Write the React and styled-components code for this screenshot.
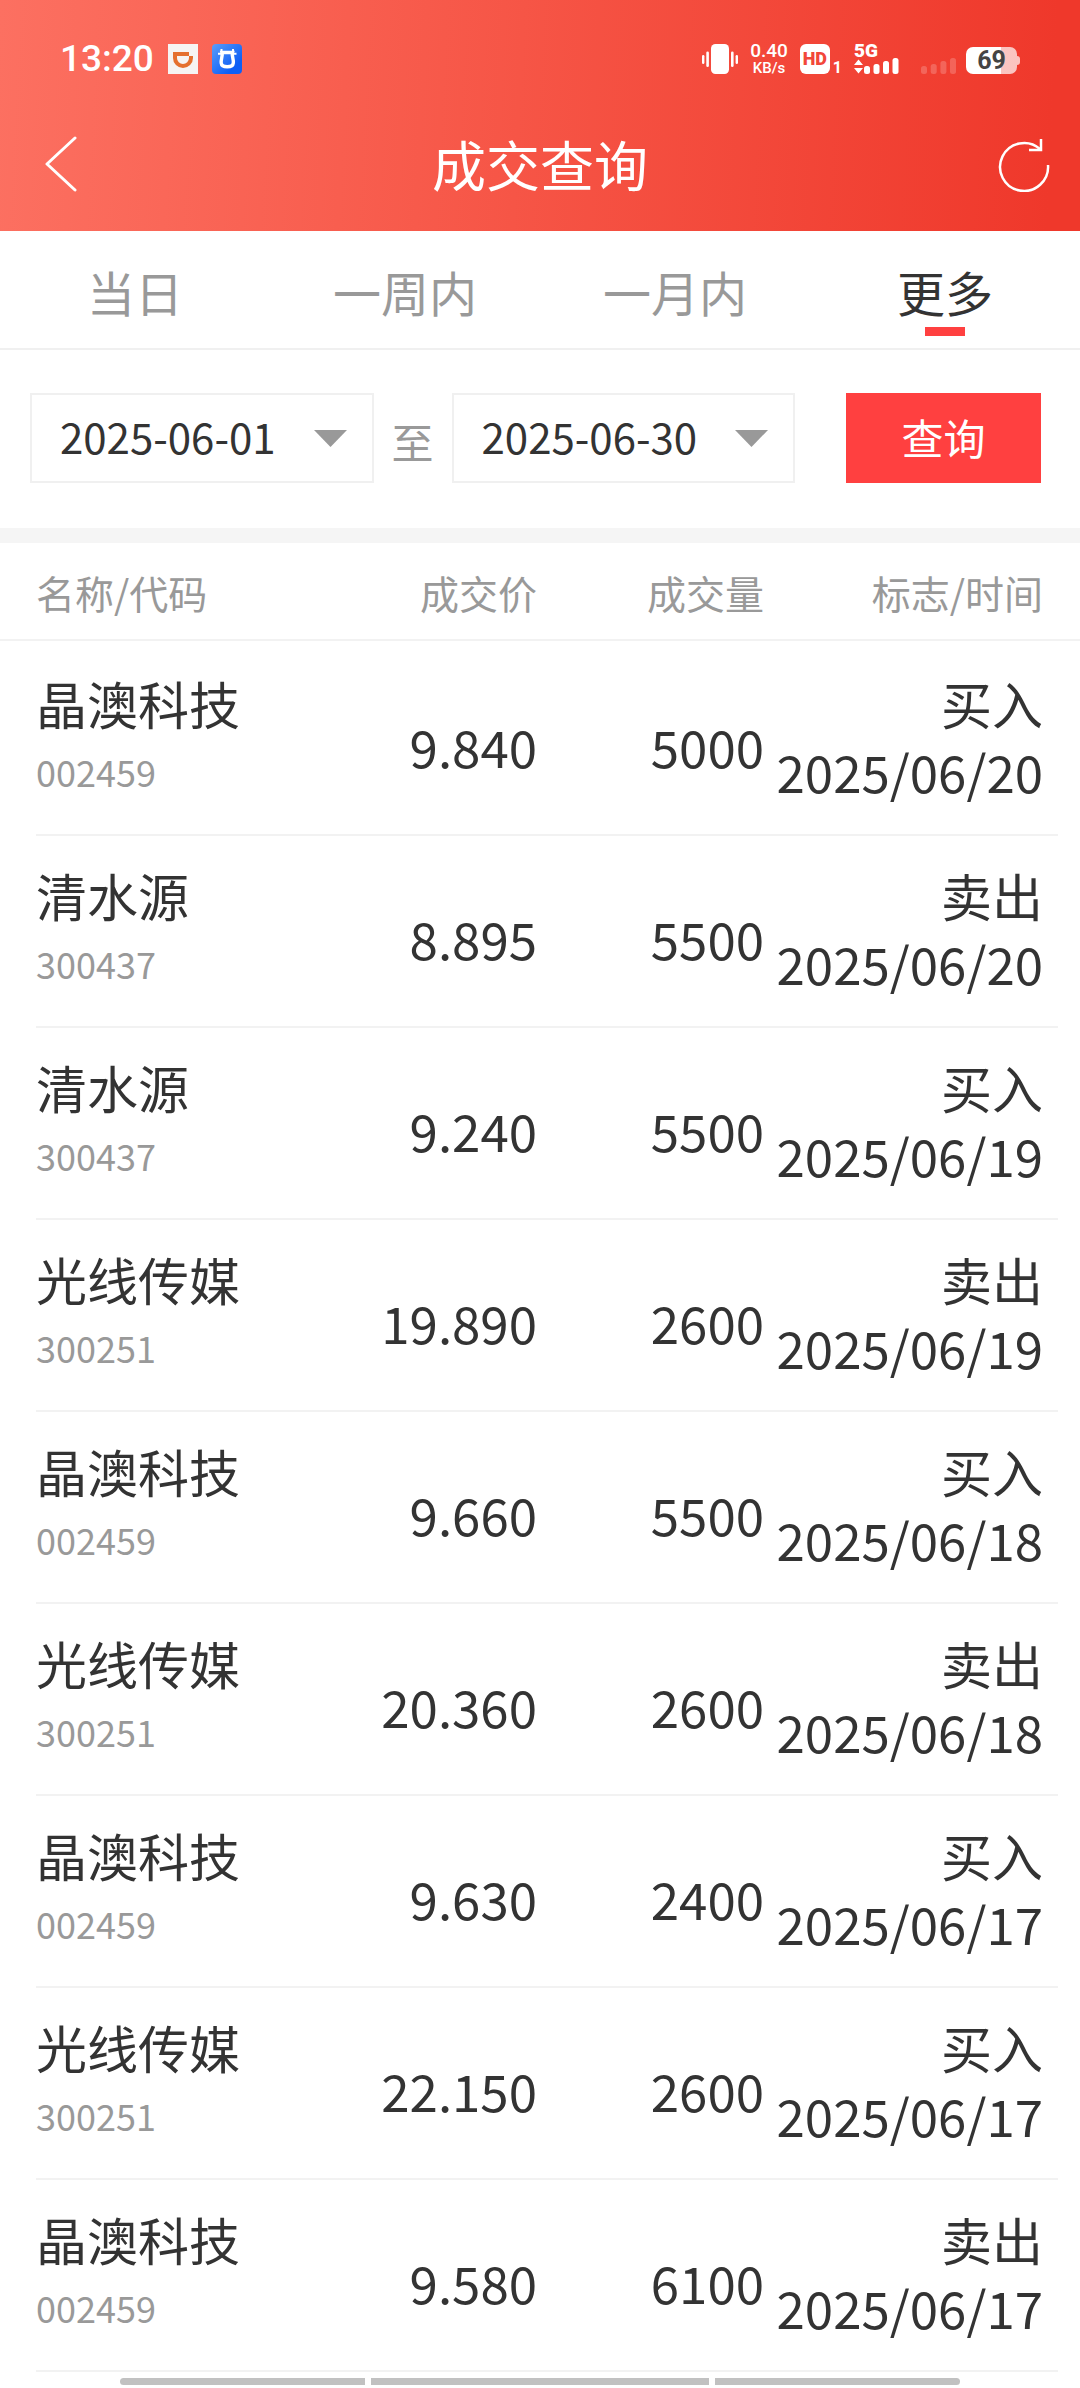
import React, { useState } from "react";
import styled, { createGlobalStyle } from "styled-components";

const tabs = ["当日", "一周内", "一月内", "更多"];

const deals = [
  { name: "晶澳科技", code: "002459", price: "9.840", volume: "5000", side: "买入", date: "2025/06/20" },
  { name: "清水源", code: "300437", price: "8.895", volume: "5500", side: "卖出", date: "2025/06/20" },
  { name: "清水源", code: "300437", price: "9.240", volume: "5500", side: "买入", date: "2025/06/19" },
  { name: "光线传媒", code: "300251", price: "19.890", volume: "2600", side: "卖出", date: "2025/06/19" },
  { name: "晶澳科技", code: "002459", price: "9.660", volume: "5500", side: "买入", date: "2025/06/18" },
  { name: "光线传媒", code: "300251", price: "20.360", volume: "2600", side: "卖出", date: "2025/06/18" },
  { name: "晶澳科技", code: "002459", price: "9.630", volume: "2400", side: "买入", date: "2025/06/17" },
  { name: "光线传媒", code: "300251", price: "22.150", volume: "2600", side: "买入", date: "2025/06/17" },
  { name: "晶澳科技", code: "002459", price: "9.580", volume: "6100", side: "卖出", date: "2025/06/17" },
];

const TaxiIcon = () => (
  <svg width="30" height="30" viewBox="0 0 30 30" aria-hidden="true">
    <rect width="30" height="30" fill="#f6f4f3" />
    <path
      d="M5 8H21V12H25V14A10 10 0 0 1 5 14ZM9 12V14A6 6 0 0 0 21 14V12Z"
      fill="#e5702f"
      fillRule="evenodd"
    />
  </svg>
);

const BullIcon = () => (
  <svg width="30" height="30" viewBox="0 0 30 30" aria-hidden="true">
    <defs>
      <linearGradient id="bull" x1="0" y1="0" x2="1" y2="1">
        <stop offset="0" stopColor="#5a9dfb" />
        <stop offset="0.75" stopColor="#0f5ff5" />
      </linearGradient>
    </defs>
    <rect width="30" height="30" rx="4" fill="url(#bull)" />
    <path
      d="M10 8.5H20.500C19.500 12 21.800 15 21.300 19C20.800 24 9.700 24 9.200 19C8.700 15 11 12 10 8.500Z"
      fill="none"
      stroke="#fff"
      strokeWidth="3.400"
    />
    <path
      d="M9.500 5V8.500M21 5V8.500M6 9.800H10M20.500 9.800H24.500"
      stroke="#fff"
      strokeWidth="2"
    />
  </svg>
);

const VibrateIcon = () => (
  <svg width="36" height="30" viewBox="0 0 36 30" fill="#fff" aria-hidden="true">
    <rect x="9" width="18" height="30" rx="4.500" />
    <rect x="0" y="11" width="2.400" height="9" rx="1.200" />
    <rect x="4.300" y="7.500" width="2.600" height="15.500" rx="1.300" />
    <rect x="29" y="7.500" width="2.600" height="15.500" rx="1.300" />
    <rect x="33.600" y="11" width="2.400" height="9" rx="1.200" />
  </svg>
);

const DataSignal = () => (
  <svg width="45" height="16" viewBox="0 0 45 16" fill="#fff" aria-hidden="true">
    <path d="M4.500 1.500L9 7H0ZM0 10H9L4.500 15.500Z" />
    <rect x="10" y="8" width="6" height="8" rx="2.500" />
    <rect x="19.500" y="6" width="6" height="10" rx="2.500" />
    <rect x="29" y="3" width="6" height="13" rx="2.500" />
    <rect x="38.500" y="0" width="6" height="16" rx="2.500" />
  </svg>
);

const EmptySignal = () => (
  <svg width="36" height="16" viewBox="0 0 36 16" fill="#fff" fillOpacity="0.2" aria-hidden="true">
    <rect x="0" y="8" width="6" height="8" rx="2.500" />
    <rect x="9.700" y="6" width="6" height="10" rx="2.500" />
    <rect x="19.400" y="3" width="6" height="13" rx="2.500" />
    <rect x="29" y="0" width="6" height="16" rx="2.500" />
  </svg>
);

const BackIcon = () => (
  <svg width="34" height="56" viewBox="0 0 34 56" fill="none" stroke="#fff" strokeWidth="3" aria-hidden="true">
    <path d="M31 2L3 28L31 54" strokeLinecap="round" strokeLinejoin="round" />
  </svg>
);

const RefreshIcon = () => (
  <svg width="52" height="56" viewBox="0 0 52 56" fill="none" stroke="#fff" strokeWidth="2.500" aria-hidden="true">
    <path d="M50 29A24 24 0 1 1 42 13" />
    <path d="M43 3V14H31" />
  </svg>
);

const DateSelect = ({ label, value }) => (
  <DateBox>
    <select aria-label={label} defaultValue={value}>
      <option value={value}>{value}</option>
    </select>
    <svg width="33" height="17" viewBox="0 0 33 17" aria-hidden="true">
      <path d="M0 0H33L16.500 17Z" fill="#999" />
    </svg>
  </DateBox>
);

const App = () => {
  const [active, setActive] = useState("更多");

  return (
    <Page>
      <GlobalStyle />
      <Header>
        <StatusBar>
          <StatusLeft>
            <Clock>13:20</Clock>
            <TaxiIcon />
            <BullIcon />
          </StatusLeft>
          <StatusRight>
            <VibrateIcon />
            <Speed>
              <b>0.40</b>
              <span>KB/s</span>
            </Speed>
            <Volte>
              <b>HD</b>
              <span>1</span>
            </Volte>
            <Network>
              <b>5G</b>
              <DataSignal />
            </Network>
            <Power>
              <EmptySignal />
              <Battery>
                <span>69</span>
              </Battery>
            </Power>
          </StatusRight>
        </StatusBar>
        <NavBar>
          <IconButton aria-label="返回">
            <BackIcon />
          </IconButton>
          <h1>成交查询</h1>
          <IconButton aria-label="刷新" $end>
            <RefreshIcon />
          </IconButton>
        </NavBar>
      </Header>

      <Tabs>
        {tabs.map((tab) => (
          <Tab key={tab} $active={tab === active} onClick={() => setActive(tab)}>
            {tab}
          </Tab>
        ))}
      </Tabs>

      <Filter>
        <DateSelect label="开始日期" value="2025-06-01" />
        <span>至</span>
        <DateSelect label="结束日期" value="2025-06-30" />
        <QueryButton>查询</QueryButton>
      </Filter>

      <DealTable>
        <thead>
          <HeadRow>
            <th>名称/代码</th>
            <th>成交价</th>
            <th>成交量</th>
            <th>标志/时间</th>
          </HeadRow>
        </thead>
        <tbody>
          {deals.map((deal, i) => (
            <DealRow key={i}>
              <td>
                <p>{deal.name}</p>
                <Code>{deal.code}</Code>
              </td>
              <NumberCell>{deal.price}</NumberCell>
              <NumberCell>{deal.volume}</NumberCell>
              <td>
                <p>{deal.side}</p>
                <p>{deal.date}</p>
              </td>
            </DealRow>
          ))}
        </tbody>
      </DealTable>

      <BottomBar>
        <Segment $grow={245} $round="4px 0 0 4px" />
        <Segment $grow={338} $round="0" />
        <Segment $grow={245} $round="0 4px 4px 0" />
      </BottomBar>
    </Page>
  );
};

const GlobalStyle = createGlobalStyle`
  * {
    box-sizing: border-box;
    margin: 0;
    padding: 0;
  }
  body {
    background: #fff;
    color: #333;
    font-family: "Noto Sans CJK SC", sans-serif;
  }
  button,
  select {
    font-family: inherit;
    color: inherit;
    border: none;
    background: none;
  }
  svg {
    display: block;
    flex-shrink: 0;
  }
`;

const Page = styled.div`
  width: 100%;
`;

const Header = styled.header`
  background: linear-gradient(93deg, #fc7061 0%, #f65546 48%, #ef382b 97%);
  color: #fff;
`;

const StatusBar = styled.div`
  display: flex;
  justify-content: space-between;
  padding: 44px 60px 22px;
  height: 96px;
  font-family: Roboto, sans-serif;
`;

const StatusLeft = styled.div`
  display: flex;
  align-items: center;
  gap: 14px;
`;

const Clock = styled.span`
  font-size: 37px;
  font-weight: 500;
  line-height: 30px;
`;

const StatusRight = styled.div`
  display: flex;
  align-items: center;
  gap: 12px;
`;

const Speed = styled.div`
  display: flex;
  flex-direction: column;
  align-items: center;
  padding-top: 2px;
  b {
    font-size: 19px;
    font-weight: 500;
    line-height: 16px;
  }
  span {
    font-size: 15px;
    font-weight: 500;
    line-height: 18px;
  }
`;

const Volte = styled.div`
  display: flex;
  align-items: flex-end;
  gap: 3px;
  b {
    width: 30px;
    height: 30px;
    border-radius: 6px;
    background: #fff;
    color: #f2473a;
    font-size: 18px;
    font-weight: 900;
    line-height: 30px;
    text-align: center;
  }
  span {
    font-size: 16px;
    font-weight: 700;
    line-height: 12px;
  }
`;

const Network = styled.div`
  display: flex;
  flex-direction: column;
  b {
    font-size: 19px;
    font-weight: 900;
    line-height: 14px;
  }
`;

const Power = styled.div`
  display: flex;
  align-items: flex-end;
  gap: 9px;
  height: 30px;
  margin-left: 10px;
`;

const Battery = styled.div`
  display: flex;
  align-items: center;
  span {
    width: 51px;
    height: 27px;
    border-radius: 7px;
    background: linear-gradient(
      to right,
      #fff 35px,
      rgba(255, 255, 255, 0.7) 35px
    );
    color: #444;
    font-size: 25px;
    font-weight: 700;
    line-height: 28px;
    text-align: center;
  }
  &::after {
    content: "";
    width: 3px;
    height: 9px;
    border-radius: 0 3px 3px 0;
    background: rgba(255, 255, 255, 0.7);
  }
`;

const NavBar = styled.div`
  display: grid;
  grid-template-columns: 1fr auto 1fr;
  align-items: center;
  height: 135px;
  padding: 0 30px 0 44px;
  h1 {
    font-size: 54px;
    font-weight: 400;
    line-height: 80px;
    /* evens out the two side paddings */
    margin-right: 14px;
  }
`;

const IconButton = styled.button`
  justify-self: ${({ $end }) => ($end ? "end" : "start")};
  cursor: pointer;
`;

const Tabs = styled.nav`
  display: flex;
  border-bottom: 2px solid #f0f0f0;
`;

const Tab = styled.button`
  flex: 1;
  padding: 24px 0 12px;
  font-size: 48px;
  line-height: 72px;
  color: ${({ $active }) => ($active ? "#333" : "#999")};
  cursor: pointer;
  &::after {
    content: "";
    display: block;
    width: 40px;
    height: 9px;
    margin: 0 auto;
    background: ${({ $active }) => ($active ? "#ff4040" : "transparent")};
  }
`;

const Filter = styled.div`
  display: flex;
  align-items: center;
  gap: 18px;
  padding: 43px 39px 45px 30px;
  border-bottom: 15px solid #f5f5f5;
  font-size: 42px;
  > span {
    color: #999;
    line-height: 60px;
    padding-top: 5px;
  }
`;

const DateBox = styled.div`
  flex: 1;
  display: grid;
  align-items: center;
  height: 90px;
  border: 2px solid #f0f0f0;
  select {
    grid-area: 1 / 1;
    width: 100%;
    height: 86px;
    padding: 0 60px 6px 28px;
    appearance: none;
    font-size: 42px;
    outline: none;
  }
  svg {
    grid-area: 1 / 1;
    justify-self: end;
    margin-right: 25px;
    pointer-events: none;
  }
`;

const QueryButton = styled.button`
  width: 195px;
  height: 90px;
  margin-left: 33px;
  padding-bottom: 4px;
  background: #ff4040;
  color: #fff;
  font-size: 42px;
  cursor: pointer;
`;

const DealTable = styled.table`
  display: block;
  width: 100%;
  thead,
  tbody {
    display: block;
  }
  tbody {
    padding-top: 3px;
  }
  tr {
    display: grid;
    grid-template-columns: 255fr 246fr 227fr 279fr;
  }
  th,
  td {
    text-align: right;
    white-space: nowrap;
  }
  th:first-child,
  td:first-child {
    text-align: left;
  }
`;

const HeadRow = styled.tr`
  padding: 21px 37px 19px 36px;
  border-bottom: 2px solid #f2f2f2;
  color: #999;
  font-size: 39px;
  line-height: 56px;
  th {
    font-weight: 400;
  }
`;

const DealRow = styled.tr`
  margin: 0 22px 0 36px;
  padding: 25px 15px 29px 0;
  border-bottom: 2px solid #f2f2f2;
  font-size: 51px;
  line-height: 68px;
`;

const NumberCell = styled.td`
  align-self: center;
  padding-top: 18px;
`;

const Code = styled.p`
  color: #999;
  font-size: 36px;
`;

const BottomBar = styled.div`
  display: flex;
  gap: 6px;
  padding: 6px 120px 3px;
`;

const Segment = styled.div`
  flex: ${({ $grow }) => $grow};
  height: 7px;
  border-radius: ${({ $round }) => $round};
  background: #c1c1c1;
`;

export default App;
